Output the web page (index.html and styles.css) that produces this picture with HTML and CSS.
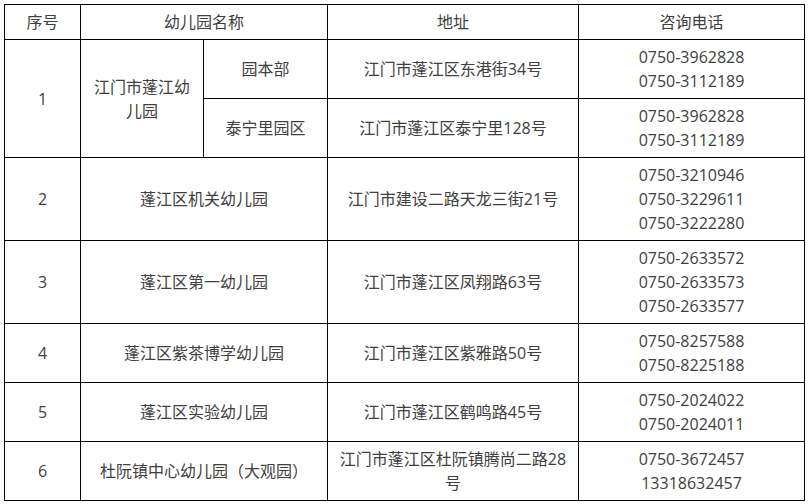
FILE: index.html
```html
<!DOCTYPE html>
<html lang="zh-CN">
<head>
<meta charset="utf-8">
<title>蓬江区幼儿园</title>
<link rel="stylesheet" href="styles.css">
</head>
<body>
<div class="page">
<table class="kg">
  <colgroup>
    <col class="c-no">
    <col class="c-name">
    <col class="c-sub">
    <col class="c-addr">
    <col class="c-tel">
  </colgroup>
  <thead>
    <tr class="r-head">
      <th>序号</th>
      <th colspan="2">幼儿园名称</th>
      <th>地址</th>
      <th>咨询电话</th>
    </tr>
  </thead>
  <tbody>
    <tr class="r2">
      <td rowspan="2">1</td>
      <td rowspan="2">江门市蓬江幼<br>儿园</td>
      <td>园本部</td>
      <td>江门市蓬江区东港街34号</td>
      <td>0750-3962828<br>0750-3112189</td>
    </tr>
    <tr class="r2">
      <td>泰宁里园区</td>
      <td>江门市蓬江区泰宁里128号</td>
      <td>0750-3962828<br>0750-3112189</td>
    </tr>
    <tr class="r3">
      <td>2</td>
      <td colspan="2">蓬江区机关幼儿园</td>
      <td>江门市建设二路天龙三街21号</td>
      <td>0750-3210946<br>0750-3229611<br>0750-3222280</td>
    </tr>
    <tr class="r3">
      <td>3</td>
      <td colspan="2">蓬江区第一幼儿园</td>
      <td>江门市蓬江区凤翔路63号</td>
      <td>0750-2633572<br>0750-2633573<br>0750-2633577</td>
    </tr>
    <tr class="r2">
      <td>4</td>
      <td colspan="2">蓬江区紫茶博学幼儿园</td>
      <td>江门市蓬江区紫雅路50号</td>
      <td>0750-8257588<br>0750-8225188</td>
    </tr>
    <tr class="r2">
      <td>5</td>
      <td colspan="2">蓬江区实验幼儿园</td>
      <td>江门市蓬江区鹤鸣路45号</td>
      <td>0750-2024022<br>0750-2024011</td>
    </tr>
    <tr class="r2">
      <td>6</td>
      <td colspan="2">杜阮镇中心幼儿园（大观园）</td>
      <td>江门市蓬江区杜阮镇腾尚二路28<br>号</td>
      <td>0750-3672457<br>13318632457</td>
    </tr>
  </tbody>
</table>
</div>
</body>
</html>
```

FILE: styles.css
```css
html, body {
  margin: 0;
  padding: 0;
  background: #ffffff;
}

.page {
  padding: 4px 0 0 4px;
}

.kg {
  border-collapse: collapse;
  table-layout: fixed;
  width: 801px;
  font-family: "Open Sans", "Noto Sans CJK SC", "Microsoft YaHei", sans-serif;
  font-size: 16px;
  line-height: 24px;
  color: #404040;
}

.c-no { width: 76px; }
.c-name { width: 123px; }
.c-sub { width: 124px; }
.c-addr { width: 251px; }
.c-tel { width: 226px; }

.kg th,
.kg td {
  border: 1px solid #000000;
  padding: 5px 3px;
  text-align: center;
  vertical-align: middle;
  font-weight: normal;
  white-space: nowrap;
}

.r-head { height: 35px; }
.r2 { height: 59px; }
.r3 { height: 83px; }
```
